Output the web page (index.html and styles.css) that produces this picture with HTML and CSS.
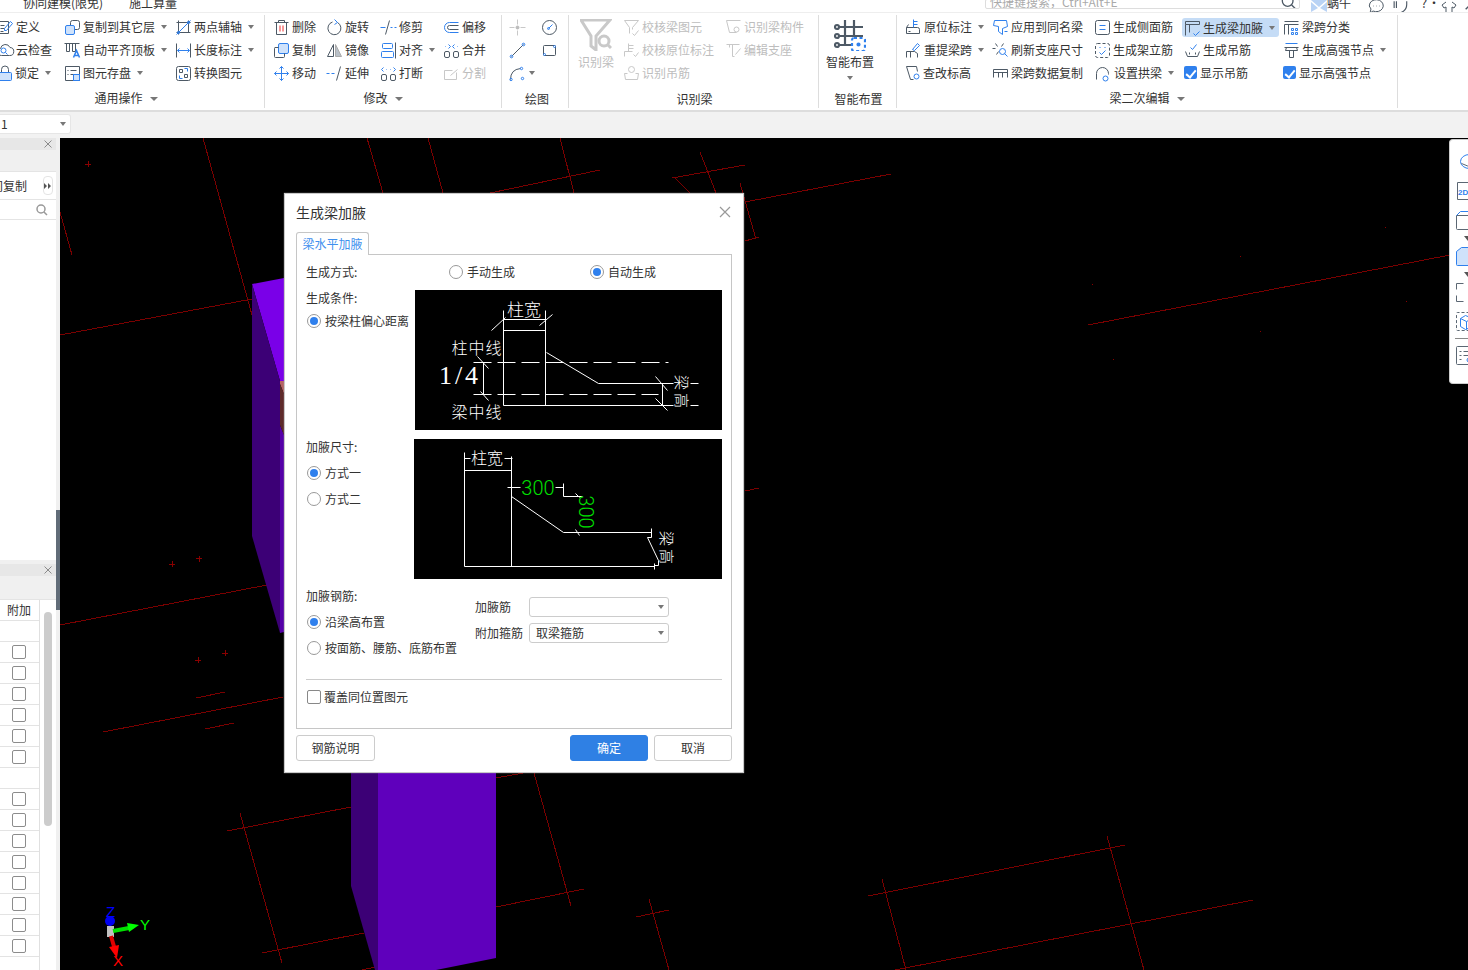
FILE: index.html
```html
<!DOCTYPE html>
<html lang="zh-CN">
<head>
<meta charset="utf-8">
<title>生成梁加腋</title>
<link rel="stylesheet" href="styles.css">
</head>
<body>
<header class="topbar">
  <nav class="topmenu"><span class="m1">协同建模(限免)</span><span class="m2">施工算量</span></nav>
  <div class="topright">
    <div class="search"><span>快捷键搜索，Ctrl+Alt+E</span><svg class="ic tiny" viewBox="0 0 12 12"><circle cx="5" cy="3" r="4"/><path d="M8 6l3 3"/></svg></div>
    <svg class="avatar" viewBox="0 0 16 12"><path class="av" d="M0 0h16L8 7zM0 2l7 6-7 4zM16 2L9 8l7 4z"/></svg>
    <span class="uname">蜗牛</span>
    <svg class="ic tool1" viewBox="0 0 16 12"><path d="M2 1a7 6 0 1 1 3 8l-3 2 1-4Q0 4 2 1z"/><path d="M5 4h.5M8 4h.5M11 4h.5"/></svg>
    <svg class="ic tool2" viewBox="0 0 14 12"><path d="M1 0v6M3 0v6M12 0v3q0 5-5 7"/></svg>
    <span class="qm">?</span><span class="dotm">·</span>
    <svg class="ic tool3" viewBox="0 0 16 12"><path d="M5 0L1 3l2 3 2-1v7h6V5l2 1 2-3-4-3"/></svg>
    <svg class="ic tool4" viewBox="0 0 8 12"><path d="M0 7l6-6"/></svg>
  </div>
</header>

<section class="ribbon">
  <div class="group g1">
    <div class="grid g1-grid">
      <div class="item first"><svg class="ic" viewBox="0 0 16 16"><path d="M1 2h10v12H1zM3 6h4M3 9h4M3 12h3"/><path class="bl" d="M13 2l2 2-6 7H7v-2z"/></svg><span>定义</span></div>
      <div class="item"><svg class="ic" viewBox="0 0 16 16"><rect x="6" y="1" width="9" height="9" rx="2"/><rect class="fillb" x="1" y="6" width="9" height="9" rx="1.5"/></svg><span>复制到其它层</span><i class="caret"></i></div>
      <div class="item"><svg class="ic" viewBox="0 0 16 16"><path d="M3 1v14M1 13h14M13 1v12M1 3h14"/><path class="bl" d="M1 15L15 1"/><circle class="bl" cx="3" cy="13" r="1.2"/><circle class="bl" cx="13" cy="3" r="1.2"/></svg><span>两点辅轴</span><i class="caret"></i></div>
      <div class="item first"><svg class="ic" viewBox="0 0 16 16"><path d="M4 13a3.5 3.5 0 0 1-1-7 5 5 0 0 1 9.500-1A4 4 0 0 1 12 13z"/><circle class="bl" cx="6" cy="8" r="2.500"/><path class="bl" d="M8 10l2 2"/></svg><span>云检查</span></div>
      <div class="item"><svg class="ic" viewBox="0 0 16 16"><path d="M0 1h15M2 1v8h3V1M8 1v8h3V1"/><path class="bl bold" d="M9 15l3-7 3 7M10 13h4"/></svg><span>自动平齐顶板</span><i class="caret"></i></div>
      <div class="item"><svg class="ic" viewBox="0 0 16 16"><path d="M1 1v14M15 1v14"/><path class="bl" d="M2 8h12M4 6L2 8l2 2M12 6l2 2-2 2"/></svg><span>长度标注</span><i class="caret"></i></div>
      <div class="item first"><svg class="ic" viewBox="0 0 16 16"><path d="M4 7V4a3 3 0 0 1 7 0v3"/><rect class="fillb" x="1" y="7" width="13" height="8" rx="1"/></svg><span class="tx1">锁定</span><i class="caret"></i></div>
      <div class="item"><svg class="ic" viewBox="0 0 16 16"><path d="M1 1h14v14H1zM3 5h1M6 5h6M3 9h1M6 9h3"/><rect class="fillb" x="9" y="9" width="6" height="6"/></svg><span>图元存盘</span><i class="caret"></i></div>
      <div class="item"><svg class="ic" viewBox="0 0 16 16"><rect x="1" y="1" width="14" height="14" rx="2"/><path d="M4 4h3v3H4zM9 9h3v3H9z"/><path class="bl" d="M9 3h3v3M7 13H4v-3"/></svg><span>转换图元</span></div>
    </div>
    <div class="gtitle gt1">通用操作<i class="caret big"></i></div>
  </div>

  <div class="group g2">
    <div class="grid g2-grid">
      <div class="item"><svg class="ic" viewBox="0 0 16 16"><path d="M1 3h14M5 3V1h6v2M3 3v12h10V3"/><path class="rd" d="M6.500 6v6M9.500 6v6"/></svg><span>删除</span></div>
      <div class="item"><svg class="ic" viewBox="0 0 16 16"><path d="M6 2.500A6.500 6.500 0 1 0 11 3"/><path class="bl" d="M8 0l3 3-3 2"/></svg><span>旋转</span></div>
      <div class="item"><svg class="ic" viewBox="0 0 16 16"><path d="M5 15L9 1"/><path class="bl" d="M0 8h5M10 8h2M14 8h2"/></svg><span>修剪</span></div>
      <div class="item"><svg class="ic" viewBox="0 0 16 16"><path class="bl" d="M15 3H6a5 5 0 0 0 0 10h9"/><path d="M15 6H6a2 2 0 0 0 0 4h9"/></svg><span>偏移</span></div>
      <div class="item"><svg class="ic" viewBox="0 0 16 16"><rect class="fillb" x="5" y="1" width="10" height="10" rx="1.500"/><path d="M5 5H1.500Q1 5 1 6v8q0 1 1 1h8q1 0 1-1v-3"/></svg><span>复制</span></div>
      <div class="item"><svg class="ic" viewBox="0 0 16 16"><path d="M7 2L1 14h6z"/><path class="fillg" d="M9 2l6 12H9z"/></svg><span>镜像</span></div>
      <div class="item"><svg class="ic" viewBox="0 0 16 16"><rect class="bl" x="2" y="1" width="10" height="5" rx="1"/><rect class="bl" x="1" y="9" width="12" height="6" rx="1"/><path d="M15 0v16"/></svg><span>对齐</span><i class="caret"></i></div>
      <div class="item"><svg class="ic" viewBox="0 0 16 16"><rect x="1" y="9" width="5" height="6" rx="1.500"/><rect x="10" y="9" width="5" height="6" rx="1.500"/><path class="bl" d="M5 2l2 2-2 2M11 2L9 4l2 2M2 4h.5M14 4h.5"/></svg><span>合并</span></div>
      <div class="item"><svg class="ic bl" viewBox="0 0 16 16"><path d="M8 1v14M1 8h14M6 3l2-2 2 2M6 13l2 2 2-2M3 6L1 8l2 2M13 6l2 2-2 2"/></svg><span>移动</span></div>
      <div class="item"><svg class="ic" viewBox="0 0 16 16"><path d="M10 15l4-14"/><path class="bl" d="M0 8h3M5 8h3"/></svg><span>延伸</span></div>
      <div class="item"><svg class="ic" viewBox="0 0 16 16"><rect x="1" y="9" width="5" height="6" rx="1.500"/><rect x="10" y="9" width="5" height="6" rx="1.500"/><path class="bl" d="M3 2L1 4l2 2M13 2l2 2-2 2M6 4h.5M9.500 4h.5"/></svg><span>打断</span></div>
      <div class="item off"><svg class="ic gr" viewBox="0 0 16 16"><path d="M13 7v7H1V5h8M7 10l7-6"/></svg><span>分割</span></div>
    </div>
    <div class="gtitle">修改<i class="caret big"></i></div>
  </div>

  <div class="group g3">
    <div class="grid g3-grid">
      <div class="item only"><svg class="ic gr" viewBox="0 0 16 16"><path d="M8 0v5M8 11v5M0 8h5M11 8h5"/><circle class="fillg2" cx="8" cy="8" r="1.500"/></svg></div>
      <div class="item only"><svg class="ic" viewBox="0 0 16 16"><circle cx="8" cy="8" r="7"/><path class="bl" d="M7 9l4-4"/><circle class="bl" cx="7" cy="9" r="1"/></svg></div>
      <div class="item only"><svg class="ic" viewBox="0 0 16 16"><path d="M2 14L14 2"/><circle class="bl" cx="2" cy="14" r="1.300"/><circle class="bl" cx="14" cy="2" r="1.300"/></svg></div>
      <div class="item only"><svg class="ic" viewBox="0 0 16 16"><rect x="2" y="3" width="12" height="10" rx="1"/><circle class="bl" cx="13" cy="4" r="1"/><circle class="bl" cx="3" cy="12" r="1"/></svg></div>
      <div class="item only"><svg class="ic" viewBox="0 0 16 16"><path d="M1 14Q1 4 11 3"/><circle class="bl" cx="1.500" cy="14" r="1.200"/><circle class="bl" cx="12" cy="3" r="1.200"/><circle class="bl" cx="13" cy="13" r="1.200"/></svg><i class="caret"></i></div>
    </div>
    <div class="gtitle t2 nudge2">绘图</div>
  </div>

  <div class="group g4">
    <div class="g4-body">
      <div class="bigbtn off"><svg class="bigic gr2" viewBox="0 0 32 32"><path d="M1 1h29L16 17v14L11 27V17z"/><circle cx="24" cy="22" r="5"/><path d="M28 26l3 3"/></svg><span>识别梁</span></div>
      <div class="grid g4-grid">
        <div class="item off"><svg class="ic gr" viewBox="0 0 16 16"><path d="M1 1h14L9 8v2M1 1l5 7v6M9 14l2 2 4-5"/></svg><span>校核梁图元</span></div>
        <div class="item off"><svg class="ic gr" viewBox="0 0 16 16"><path d="M1 1h14M1 1l3 12h7"/><circle cx="11" cy="10" r="2.500"/></svg><span>识别梁构件</span></div>
        <div class="item off"><svg class="ic gr" viewBox="0 0 16 16"><path d="M1 14V9h8M5 9V1M5 3h5M5 6h5M10 12l2 2 3-4"/></svg><span>校核原位标注</span></div>
        <div class="item off"><svg class="ic gr" viewBox="0 0 16 16"><path d="M1 2h13M4 2v3M7 2v12M7 14h2M10 12l5-6"/></svg><span>编辑支座</span></div>
        <div class="item off"><svg class="ic gr" viewBox="0 0 16 16"><circle cx="8" cy="4" r="3"/><path d="M4 8H1l1 6h12l1-6h-3"/></svg><span>识别吊筋</span></div>
      </div>
    </div>
    <div class="gtitle t2 nudge1">识别梁</div>
  </div>

  <div class="group g5">
    <div class="bigbtn smart"><svg class="bigic" viewBox="0 0 32 32"><path class="thick" d="M5 8h24M5 17h24M5 26h12M11 1v25M20 1v16"/><circle class="thick" cx="3" cy="8" r="2"/><circle class="thick" cx="3" cy="17" r="2"/><circle class="thick" cx="3" cy="26" r="2"/><rect class="bl thick dash" x="18" y="19" width="13" height="13" rx="2"/><circle class="bl thick" cx="24.500" cy="25.500" r="1"/></svg><span>智能布置</span><i class="caret"></i></div>
    <div class="gtitle t2 nudge1">智能布置</div>
  </div>

  <div class="group g6">
    <div class="grid g6-grid">
      <div class="item"><svg class="ic" viewBox="0 0 16 16"><path d="M1 8h11a2 2 0 0 1 2 2v4H1zM1 8l2-3M3 12h2"/><path class="bl" d="M8 8V0M8 2h4M8 5h4"/></svg><span>原位标注</span><i class="caret"></i></div>
      <div class="item"><svg class="ic bl" viewBox="0 0 16 16"><path d="M2 1h12l1 6-5 2v6L6 12V7L1 6z"/><path d="M12 12h3"/></svg><span>应用到同名梁</span></div>
      <div class="item"><svg class="ic" viewBox="0 0 16 16"><rect x="1" y="1" width="14" height="14" rx="2"/><path class="bl" d="M5 6h6M5 10h6"/></svg><span>生成侧面筋</span></div>
      <div class="item hl"><svg class="ic" viewBox="0 0 16 16"><path d="M1 1h14v3H1zM1 4v11M5 4v8"/><path class="bl" d="M9 13l2 2 4-4"/></svg><span>生成梁加腋</span><i class="caret"></i></div>
      <div class="item"><svg class="ic" viewBox="0 0 16 16"><path d="M1 2h14M1 5h14M1 5v10M5 5v10"/><path class="bl" d="M8 9h2v2H8zM12 9h2v2h-2zM8 13h2v2H8zM12 13h2v2h-2z"/></svg><span>梁跨分类</span></div>

      <div class="item"><svg class="ic" viewBox="0 0 16 16"><path d="M1 15V9h8l3 2v4M5 9v6"/><path class="bl" d="M7 7l5-6 2 2-5 5z"/></svg><span>重提梁跨</span><i class="caret"></i></div>
      <div class="item"><svg class="ic" viewBox="0 0 16 16"><path d="M0 6h3M3 1l2 3M11 1L9 4M6 9L4 12"/><circle class="bl" cx="10" cy="9" r="3"/><path class="bl" d="M12 11l3 3"/></svg><span>刷新支座尺寸</span></div>
      <div class="item"><svg class="ic dash1" viewBox="0 0 16 16"><rect x="1" y="1" width="14" height="14" rx="2"/><path class="bl plain" d="M5 5h1M10 5h1M5 10l2 2 4-4"/></svg><span>生成架立筋</span></div>
      <div class="item"><svg class="ic" viewBox="0 0 16 16"><path d="M1 9l2 5h10l2-5M5 10v2M11 10v2"/><path class="bl" d="M6 5l2 2 4-5"/></svg><span>生成吊筋</span></div>
      <div class="item"><svg class="ic" viewBox="0 0 16 16"><path d="M1 5h14M3 5l-1 3h12l-1-3M6 8v7h4V8"/><path class="bl" d="M2 1h12"/></svg><span>生成高强节点</span><i class="caret"></i></div>

      <div class="item"><svg class="ic" viewBox="0 0 16 16"><path d="M1 1h10l1 5M1 1l4 13h3"/><circle class="bl" cx="11" cy="11" r="2.500"/></svg><span class="tx1">查改标高</span></div>
      <div class="item"><svg class="ic" viewBox="0 0 16 16"><path d="M1 7h14M1 4h14M1 4v8M6 7v5M10 7v5M15 4v8"/></svg><span>梁跨数据复制</span></div>
      <div class="item"><svg class="ic" viewBox="0 0 16 16"><path d="M2 14V8a6 6 0 0 1 12 0v1"/><circle class="bl" cx="11" cy="13" r="2.500"/></svg><span class="tx2">设置拱梁</span><i class="caret"></i></div>
      <label class="item chk"><span class="check on"></span><span>显示吊筋</span></label>
      <label class="item chk"><span class="check on"></span><span>显示高强节点</span></label>
    </div>
    <div class="gtitle">梁二次编辑<i class="caret big"></i></div>
  </div>
</section>

<section class="subbar"><div class="floorsel"><span>1</span><i class="caret"></i></div></section>

<main class="workspace">
  <aside class="side">
    <div class="panel upper">
      <div class="phead"><svg class="x" viewBox="0 0 8 8"><path d="M.5.5l7 7M7.500.5l-7 7"/></svg></div>
      <div class="pgrey"></div>
      <div class="prow"><span class="clip">间复制</span><span class="more"><svg class="moreic" viewBox="0 0 8 6"><path d="M0 0l3 3-3 3zM4 0l3 3-3 3z"/></svg></span></div>
      <div class="psearch"><svg class="ic search-ic" viewBox="0 0 12 12"><circle cx="5" cy="5" r="4"/><path d="M8 8l3 3"/></svg></div>
    </div>
    <div class="panel lower">
      <div class="phead"><svg class="x" viewBox="0 0 8 8"><path d="M.5.5l7 7M7.500.5l-7 7"/></svg></div>
      <div class="pgrey lg"></div>
      <div class="tbl">
        <div class="tr th"><span>附加</span></div>
        <div class="tr"></div>
        <div class="tr"><i class="cb"></i></div>
        <div class="tr"><i class="cb"></i></div>
        <div class="tr"><i class="cb"></i></div>
        <div class="tr"><i class="cb"></i></div>
        <div class="tr"><i class="cb"></i></div>
        <div class="tr"><i class="cb"></i></div>
        <div class="tr"></div>
        <div class="tr"><i class="cb"></i></div>
        <div class="tr"><i class="cb"></i></div>
        <div class="tr"><i class="cb"></i></div>
        <div class="tr"><i class="cb"></i></div>
        <div class="tr"><i class="cb"></i></div>
        <div class="tr"><i class="cb"></i></div>
        <div class="tr"><i class="cb"></i></div>
        <div class="tr"><i class="cb"></i></div>
        <div class="tr"></div>
      </div>
      <div class="scroll"></div>
    </div>
    <div class="splitter"></div>
  </aside>

  <div class="canvas">
    <svg class="scene" viewBox="60 138 1408 832">
      <g class="grid3d">
        <path d="M203 138L252 315M60 335L252 299M60 212L72 255M60 625L267 585"/>
        <path d="M367 138L383 193M428 138L443 193M560 138L574 193M490 193L600 170"/>
        <path d="M672 178L745 165M700 152L716 193M675 178L690 193"/>
        <path d="M745 202L891 174M740 183L756 239M745 241L759 237M745 491L759 488"/>
        <path d="M1088 325L1450 255M868 896L1125 845M882 879L906 970M895 970L1253 900M1107 836L1144 970"/>
        <path d="M103 732L283 697M196 698L225 692M205 729L234 723"/>
        <path d="M227 831L351 807M240 813L282 963M262 953L364 933M496 778L523 773M534 773L571 906M496 907L584 889M649 899L669 970M636 917L669 910M362 970L375 967"/>
        <path class="star" d="M85 164.500h6M88 161v6M169 564.500h6M172 561v6M196 559l6-1M199 556l1 6M195 660.500h6M198 657v6M222 653.500h6M225 650v6"/>
        <path class="star" d="M1092 284h1M1240 256h1M1385 227h1M1406 301h1M1260 331h1M1113 359h1"/>
      </g>
      <polygon class="p-top" points="252,284 284,278 284,381 280,381"/>
      <polygon class="p-dark" points="252,284 280,381 280,633 252,536"/>
      <polygon class="p-mid" points="280,425 284,435 284,632 280,633"/>
      <polygon class="p-pink" points="280,381 284,381 284,394 280,384"/>
      <polygon class="p-brown" points="280,384 284,394 284,435 280,425"/>
      <polygon class="p-dark" points="351,772 378,772 378,970 375,970 351,886"/>
      <polygon class="p-front" points="378,772 496,772 496,958 436,970 378,970"/>
      <g class="axis">
        <path class="ax-z" d="M110 916v12"/>
        <circle class="ax-zb" cx="110" cy="921" r="5"/>
        <rect class="ax-c" x="107" y="926" width="7" height="11"/>
        <path class="ax-y" d="M113 931l16-3"/>
        <polygon class="ax-yh" points="127,923 139,925 129,932"/>
        <path class="ax-x" d="M111 936l4 14"/>
        <polygon class="ax-xh" points="109,947 119,945 117,958"/>
        <text class="lb-z" x="106" y="917">Z</text>
        <text class="lb-y" x="140" y="930">Y</text>
        <text class="lb-x" x="113" y="966">X</text>
      </g>
    </svg>

    <div class="floatbar">
      <svg class="fic" viewBox="0 0 19 20"><ellipse class="bl" cx="14" cy="9" rx="9" ry="7"/><path d="M6 11q6 4 13 2"/></svg>
      <svg class="fic" viewBox="0 0 19 20"><path d="M19 1H2v17h17"/><text class="t2d" x="3" y="14">2D</text></svg>
      <svg class="fic" viewBox="0 0 19 20"><path d="M19 5H1v13q0 1 1 1h17"/><path class="bl" d="M1 5l4-4h14"/></svg>
      <i class="fcaret"></i>
      <svg class="fic" viewBox="0 0 19 20"><path class="fillb" d="M19 1H6L1 5v13q0 1 1 1h17z"/></svg>
      <i class="fcaret"></i>
      <svg class="fic" viewBox="0 0 19 20"><path d="M8 1H1v6M1 13v6h7"/></svg>
      <svg class="fic" viewBox="0 0 19 20"><path class="dsh" d="M19 1H2q-1 0-1 1v16q0 1 1 1h17"/><path class="bl" d="M10 4l7 3v8l-7 3-5-3V7zM5 7l6 3 6-3M11 10v8"/></svg>
      <hr class="fsep">
      <svg class="fic" viewBox="0 0 19 20"><path d="M19 1H2q-1 0-1 1v16q0 1 1 1h17M4 6h2M8 6h11M4 10h2M8 10h11M4 14h2"/><circle class="bl" cx="14" cy="15" r="2"/></svg>
    </div>

    <div class="dialog">
      <div class="dtitle"><span>生成梁加腋</span><svg class="dclose" viewBox="0 0 12 12"><path d="M1 1l10 10M11 1L1 11"/></svg></div>
      <div class="tab">梁水平加腋</div>
      <div class="dpanel">
        <div class="rowa">
          <span class="la">生成方式:</span>
          <label class="rad"><i class="radio"></i>手动生成</label>
          <label class="rad r2"><i class="radio on"></i>自动生成</label>
        </div>
        <div class="rowb">
          <div class="lcol">
            <div class="lb1">生成条件:</div>
            <label class="rad rb1"><i class="radio on"></i>按梁柱偏心距离</label>
          </div>
          <svg class="dia" viewBox="0 0 307 140">
            <path class="w" d="M88 20V115M130 20V115M88 29H130M88 40H130M76 40L90 27M124 35L137 24M88 115H258M131 62L183 93H258M247 93V115M240 86L252 100M240 108L252 120M275 93H283M275 115H283M68 72V104M62 66L73 78M65 101L73 110"/>
            <path class="w dashed" d="M58 72H253M58 104H243"/>
            <text class="cad big17" x="109" y="26" text-anchor="middle">柱宽</text>
            <text class="cad sp" x="62" y="64" text-anchor="middle">柱中线</text>
            <text class="cad sp" x="62" y="128" text-anchor="middle">梁中线</text>
            <text class="frac" x="45" y="94" text-anchor="middle">1/4</text>
            <text class="cad sm" x="261" y="103" text-anchor="middle" transform="rotate(90 261 103)">梁高</text>
          </svg>
        </div>
        <div class="rowc">
          <div class="lcol lc2">
            <div class="lb1">加腋尺寸:</div>
            <label class="rad rc1"><i class="radio on"></i>方式一</label>
            <label class="rad rc2"><i class="radio"></i>方式二</label>
          </div>
          <svg class="dia d2" viewBox="0 0 308 140">
            <path class="w" d="M50 13V127M97 17V127M50 31H97M50 127H240M50 19H56M90 19H98M93 48H106M141 48H149M149 44V57M149 57H168M97 57L149 93H237M237 89V98M237 98H233L244 121V126H240M240 124V130M161 54L165 58M161 90L165 96"/>
            <text class="cad" x="73" y="25" text-anchor="middle">柱宽</text>
            <text class="num" x="124" y="56" text-anchor="middle">300</text>
            <text class="num" x="165" y="73" text-anchor="middle" transform="rotate(90 165 73)">300</text>
            <text class="cad sm" x="247" y="110" text-anchor="middle" transform="rotate(90 247 110)">梁高</text>
          </svg>
        </div>
        <div class="rowd">
          <div class="lcol lc3">
            <div class="lb1">加腋钢筋:</div>
            <label class="rad rd1"><i class="radio on"></i>沿梁高布置</label>
            <label class="rad rd2"><i class="radio"></i>按面筋、腰筋、底筋布置</label>
          </div>
          <div class="selects">
            <div class="selrow"><span class="sl">加腋筋</span><div class="sel"><span></span><i class="caret"></i></div></div>
            <div class="selrow"><span class="sl">附加箍筋</span><div class="sel"><span>取梁箍筋</span><i class="caret"></i></div></div>
          </div>
        </div>
        <hr class="dline">
        <label class="cover"><i class="boxcb"></i>覆盖同位置图元</label>
      </div>
      <div class="dfoot">
        <button class="btn b1" type="button">钢筋说明</button>
        <button class="btn primary" type="button">确定</button>
        <button class="btn" type="button">取消</button>
      </div>
    </div>
  </div>
</main>
</body>
</html>
```
FILE: styles.css
```css
* { box-sizing: border-box; }
html, body { margin: 0; padding: 0; }
body {
  width: 1468px; height: 970px; overflow: hidden; background: #f2f2f2; color: #333;
  font: 12px/16px "Noto Sans CJK SC", "Microsoft YaHei", sans-serif;
  display: flex; flex-direction: column;
}

/* top strip */
.topbar { height: 13px; flex: none; background: #fff; border-bottom: 1px solid #eee; display: flex; overflow: hidden; position: relative; }
.topmenu { display: flex; margin-top: -5px; height: 16px; }
.m1 { margin-left: 23px; width: 106px; }
.topright { margin-left: auto; margin-right: -11px; display: flex; align-items: flex-start; }
.search { width: 315px; height: 10px; margin-top: -1px; border: 1px solid #ddd; border-radius: 2px; display: flex; justify-content: space-between; padding-left: 4px; color: #aaa; overflow: hidden; margin-right: 11px; }
.search span { margin-top: -6px; }
.tiny { width: 12px; height: 12px; margin: -3px 2px 0 0; stroke: #aaa; }
.avatar { width: 16px; height: 12px; }
.av { fill: #b9d3f5; }
.uname { margin-top: -5px; width: 41px; }
.tool1 { width: 16px; height: 12px; margin-right: 9px; }
.tool2 { width: 14px; height: 12px; margin-right: 12px; }
.qm { margin-top: -5px; font-size: 13px; width: 7px; }
.dotm { margin-top: -5px; width: 13px; }
.tool3 { width: 16px; height: 12px; margin-right: 6px; }
.tool4 { width: 8px; height: 12px; }
.ic { width: 16px; height: 16px; flex: none; fill: none; stroke: #4d5965; stroke-width: 1; overflow: visible; }
.ribbon .ic > * { transform: translate(.5px, .5px); }
.bl { stroke: #2f80ed; fill: none; }
.plain { stroke-dasharray: none; }
.bold { stroke-width: 1.5; }
.rd { stroke: #e33; }
.fillb { fill: #cfe2fb; stroke: #2f80ed; }
.fillg { fill: #b8c0c8; stroke: #aaa; }
.fillg2 { fill: #bbb; stroke: #bbb; }
.gr { stroke: #c8c8c8; }
.dash1 rect { stroke-dasharray: 3 2; }

/* ribbon */
.ribbon { height: 99px; flex: none; background: #fff; border-bottom: 2px solid #ddd; display: flex; padding-top: 2px; overflow: hidden; }
.group { position: relative; height: 93px; border-right: 1px solid #ddd; flex: none; display: flex; flex-direction: column; }
.g1 { width: 265px; }
.g2 { width: 237px; }
.g3 { width: 67px; }
.g4 { width: 250px; }
.g5 { width: 78px; }
.g6 { width: 501px; }
.grid { display: grid; grid-auto-rows: 23px; }
.item { display: flex; align-items: center; gap: 3px; white-space: nowrap; height: 23px; }
.first { margin-left: -3px; }
.tx1 { margin-left: -1px; }
.tx2 { margin-left: 1px; }
.g1-grid { grid-template-columns: 64px 111px 1fr; }
.g2-grid { grid-template-columns: 53px 54px 63px 1fr; padding-left: 8px; }
.g3-grid { grid-template-columns: 32px 1fr; padding-left: 7px; }
.only { gap: 4px; }
.only .caret { margin-left: 0; }
.g4-body { display: flex; height: 70px; }
.g4-grid { grid-template-columns: 102px 1fr; align-self: flex-start; }
.off { color: #bdbdbd; }
.bigbtn { width: 54px; display: flex; flex-direction: column; align-items: center; flex: none; padding-top: 4px; }
.bigic { width: 32px; height: 32px; fill: none; stroke: #4d5965; display: block; }
.bigic.gr2 { stroke: #c9c9c9; stroke-width: 3; }
.bigbtn span { margin-top: 3px; white-space: nowrap; }
.smart { width: 62px; height: 70px; }
.smart .caret { margin: 6px 0 0; }
.thick { stroke-width: 2.200; fill: none; }
.dash { stroke-dasharray: 3 2.500; }
.g6-grid { grid-template-columns: 87px 102px 90px 99px 1fr; padding-left: 8px; }
.hl { background: #c5dcf6; border-radius: 3px; margin: 3px 6px 1px -2px; height: 19px; padding-left: 2px; width: 97px; }
.gtitle { position: absolute; left: 0; right: 0; top: 75px; text-align: center; }
.gt1 { padding-right: 12px; }
.t2 { top: 76px; }
.nudge1 { padding-left: 2px; }
.nudge2 { padding-left: 4px; }
.caret { display: inline-block; width: 0; height: 0; border: 3px solid transparent; border-top: 4px solid #777; border-bottom: 0; margin-left: 3px; flex: none; }
.big { border-width: 4px; border-bottom: 0; margin-left: 7px; vertical-align: 2px; }
.chk .check { width: 13px; height: 13px; }
.check { display: inline-block; border-radius: 2px; background: #2f80ed; position: relative; flex: none; }
.check::after { content: ""; position: absolute; left: 4px; top: 1.500px; width: 4px; height: 8px; border: solid #fff; border-width: 0 2px 2px 0; transform: rotate(40deg); }

/* sub toolbar */
.subbar { height: 26px; flex: none; background: #f2f2f2; padding-top: 2px; }
.floorsel { width: 71px; height: 20px; background: #fff; border: 1px solid #e6e6e6; border-left: 0; border-radius: 0 3px 3px 0; display: flex; align-items: center; justify-content: space-between; padding: 0 4px 0 1px; }

/* workspace */
.workspace { flex: 1; display: flex; min-height: 0; }
.side { width: 60px; flex: none; background: #f0f0f0; position: relative; display: flex; flex-direction: column; overflow: hidden; }
.panel { width: 56px; background: #fff; position: relative; overflow: hidden; flex: none; }
.upper { height: 422px; }
.lower { height: 406px; margin-top: 4px; }
.phead { height: 12px; background: #e7e7e7; position: relative; }
.x { position: absolute; right: 4px; top: 2px; width: 8px; height: 8px; stroke: #8a8a8a; fill: none; }
.pgrey { height: 22px; background: #f0f0f0; border-bottom: 1px solid #e4e4e4; }
.pgrey.lg { height: 24px; }
.prow { height: 28px; display: flex; align-items: center; justify-content: flex-end; border-bottom: 1px solid #e4e4e4; position: relative; overflow: hidden; }
.clip { position: absolute; right: 29px; white-space: nowrap; }
.more { width: 10px; height: 19px; border: 1px solid #e4e4e4; border-radius: 4px; margin-right: 3px; display: flex; align-items: center; justify-content: center; }
.moreic { width: 8px; height: 6px; fill: #555; flex: none; }
.psearch { height: 20px; display: flex; align-items: center; justify-content: flex-end; border-bottom: 1px solid #e4e4e4; padding-right: 8px; }
.search-ic { width: 12px; height: 12px; stroke: #999; stroke-width: 1.5; }
.tbl { border-right: 1px solid #e0e0e0; width: 40px; }
.tr { height: 21px; border-bottom: 1px solid #e3e3e3; display: flex; align-items: center; justify-content: center; width: 39px; padding-right: 1px; }
.cb { width: 14px; height: 14px; border: 1px solid #8c8c8c; border-radius: 2px; display: block; }
.scroll { position: absolute; left: 44px; top: 48px; width: 8px; height: 214px; border-radius: 4px; background: #ccc; }
.splitter { position: absolute; left: 56px; top: 372px; width: 4px; height: 100px; background: #616c78; }

/* canvas */
.canvas { flex: 1; position: relative; background: #000; overflow: hidden; }
.scene { position: absolute; left: 0; top: 0; width: 1408px; height: 832px; display: block; }
.grid3d path { fill: none; stroke: #7a0000; stroke-width: 1; shape-rendering: crispEdges; }
.grid3d .star { stroke: #8a0000; }
.p-top { fill: #7a00e8; }
.p-dark { fill: #3c0076; }
.p-mid { fill: #5500a8; }
.p-pink { fill: #b46464; }
.p-brown { fill: #5e2a2a; }
.p-front { fill: #5f00bc; }
.ax-z { stroke: #0000e0; stroke-width: 2; }
.ax-zb { fill: #0000f0; }
.ax-c { fill: #c0c0c0; }
.ax-y { stroke: #00e000; stroke-width: 4; }
.ax-yh { fill: #00ff00; }
.ax-x { stroke: #e00000; stroke-width: 4; }
.ax-xh { fill: #ff0000; }
.lb-z, .lb-y, .lb-x { font: 15px "Liberation Sans", sans-serif; }
.lb-z { fill: #0000ff; }
.lb-y { fill: #00ff00; }
.lb-x { fill: #ff0000; }

.floatbar { position: absolute; right: 0; top: 1px; width: 19px; height: 245px; background: #fff; border: 1px solid #ccc; border-right: 0; border-radius: 4px 0 0 4px; display: flex; flex-direction: column; align-items: flex-start; padding: 12px 0 0 5px; }
.fic { width: 19px; height: 20px; flex: none; fill: none; stroke: #5b6773; margin-bottom: 9px; }
.fic > path, .fic > ellipse { transform: translate(.5px, .5px); }
.fic + .fcaret { margin-top: -3px; }
.fcaret { width: 0; height: 0; border: 4px solid transparent; border-top: 5px solid #555; border-bottom: 0; margin: 0 0 5px 9px; flex: none; }
.fsep { width: 14px; margin: -2px 0 6px; border: 0; border-top: 1px solid #888; flex: none; }
.t2d { font: bold 8px "Liberation Sans", sans-serif; fill: #2f80ed; stroke: none; }
.dsh { stroke-dasharray: 3 2; }

/* dialog */
.dialog { position: absolute; left: 224px; top: 55px; width: 460px; height: 580px; background: #fff; border: 1px solid #c9c9c9; padding: 0 11px; box-shadow: 0 0 1px #aaa; }
.dtitle { height: 38px; padding-bottom: 2px; display: flex; align-items: center; justify-content: space-between; font-size: 14px; }
.dclose { width: 12px; height: 12px; stroke: #999; stroke-width: 1.200; fill: none; margin-right: 1px; }
.tab { width: 73px; height: 23px; border: 1px solid #c6c6c6; border-bottom: 0; border-radius: 3px 3px 0 0; color: #3f90ee; background: #fff; text-align: center; line-height: 21px; position: relative; z-index: 1; }
.dpanel { width: 436px; height: 475px; margin-top: -1px; border: 1px solid #c6c6c6; padding: 0 9px; }
.rowa { height: 24px; margin-top: 5px; display: flex; align-items: center; }
.la { width: 143px; }
.rad { display: flex; align-items: center; gap: 4px; white-space: nowrap; }
.r2 { margin-left: 75px; }
.radio { width: 14px; height: 14px; border: 1px solid #999; border-radius: 50%; background: #fff; display: flex; align-items: center; justify-content: center; flex: none; }
.radio.on::after { content: ""; width: 8px; height: 8px; border-radius: 50%; background: #2f80ed; }
.rowb { height: 140px; margin-top: 6px; display: flex; }
.rowc { height: 140px; margin-top: 9px; display: flex; }
.lcol { width: 109px; flex: none; }
.lc2 { width: 108px; }
.lb1 { height: 16px; margin-bottom: 7px; }
.rb1 { margin-left: 1px; margin-top: 7px; }
.rc1, .rc2, .rd1, .rd2 { margin: 10px 0 0 1px; }
.dia { width: 307px; height: 140px; background: #000; display: block; flex: none; }
.d2 { width: 308px; }
.w { stroke: #fff; stroke-width: 1; fill: none; transform: translate(.5px, .5px); }
.dashed { stroke-dasharray: 18 6; }
.cad { fill: #fff; font: 300 16px "Noto Sans CJK SC", sans-serif; }
.big17 { font-size: 17px; }
.sp { letter-spacing: 1px; }
.sm { font-size: 15px; letter-spacing: 3px; }
.frac { fill: #fff; font: 26px "Liberation Serif", serif; letter-spacing: 3px; }
.num { fill: #00e000; font: 300 20px Roboto, sans-serif; }
.rowd { display: flex; margin-top: 9px; height: 91px; }
.lc3 { width: 169px; }
.selects { padding-top: 9px; display: flex; flex-direction: column; gap: 6px; }
.selrow { display: flex; align-items: center; height: 20px; }
.sl { width: 54px; }
.sel { width: 140px; height: 20px; border: 1px solid #ccc; border-radius: 3px; display: flex; align-items: center; justify-content: space-between; padding: 0 4px 0 6px; }
.dline { margin: 0; border: 0; border-top: 1px solid #ccc; }
.cover { display: flex; align-items: center; gap: 3px; margin: 9px 0 0 1px; white-space: nowrap; }
.boxcb { width: 14px; height: 14px; border: 1px solid #888; border-radius: 2px; flex: none; }
.dfoot { display: flex; margin-top: 6px; gap: 6px; }
.btn { width: 78px; height: 26px; border: 1px solid #ccc; border-radius: 3px; background: #fff; color: #333; font: inherit; padding: 0; }
.b1 { width: 79px; margin-right: 189px; }
.primary { background: #2f80e4; border-color: #2f80e4; color: #fff; }
```
